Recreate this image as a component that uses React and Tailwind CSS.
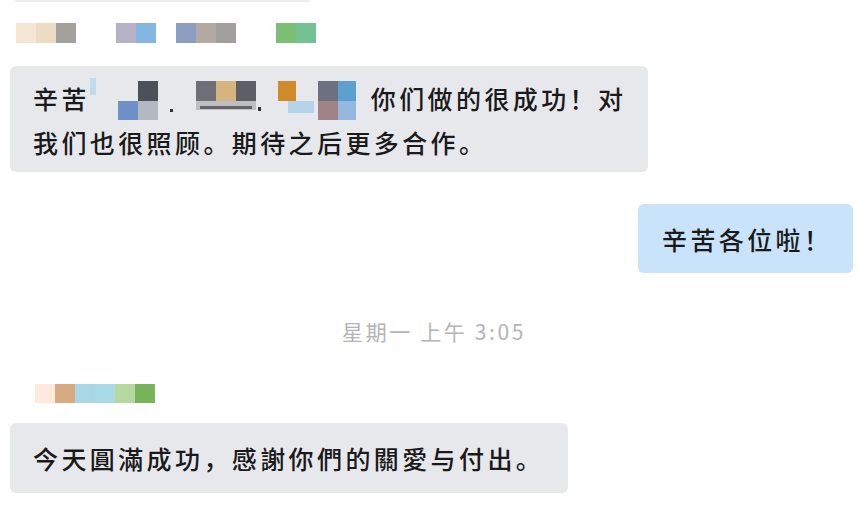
const topBlocks = [
  { x: 16, c: '#f5e6d4' },
  { x: 36, c: '#ecdcc4' },
  { x: 56, c: '#a3a19b' },
  { x: 116, c: '#b4b2c4' },
  { x: 136, c: '#84b6e2' },
  { x: 176, c: '#8c9ec2' },
  { x: 196, c: '#b2aaa2' },
  { x: 216, c: '#a2a09c' },
  { x: 276, c: '#7cc076' },
  { x: 296, c: '#74c294' },
]

const bottomBlocks = ['#fcebdc', '#d8aa82', '#a8d8e6', '#a8dae8', '#b4d8a0', '#78b45a']

// mosaic over the names in the first bubble, coords relative to svg (x from 89)
const nameRects = [
  { x: 0, y: 2, w: 6, h: 17, c: '#c0dcf0' },
  { x: 48, y: 5, w: 20, h: 20, c: '#4c5058' },
  { x: 28, y: 25, w: 20, h: 20, c: '#7090c8' },
  { x: 48, y: 25, w: 20, h: 20, c: '#b4b8c0' },
  { x: 106, y: 5, w: 20, h: 20, c: '#6e6e76' },
  { x: 126, y: 5, w: 20, h: 20, c: '#d6b47e' },
  { x: 146, y: 5, w: 20, h: 20, c: '#5e5e66' },
  { x: 188, y: 5, w: 18, h: 20, c: '#d08a2a' },
  { x: 198, y: 25, w: 26, h: 12, c: '#b4d4ea' },
  { x: 228, y: 5, w: 20, h: 20, c: '#6c7080' },
  { x: 248, y: 5, w: 18, h: 20, c: '#5ca0d0' },
  { x: 228, y: 25, w: 20, h: 20, c: '#a08486' },
  { x: 248, y: 25, w: 18, h: 20, c: '#94b8e0' },
]

function NameMosaic() {
  return (
    <svg width="281" height="44" viewBox="0 0 281 44" className="shrink-0">
      {nameRects.map((r, i) => (
        <rect key={i} x={r.x} y={r.y} width={r.w} height={r.h} fill={r.c} />
      ))}
      <rect x="80" y="33" width="3" height="3" fill="#333" />
      <rect x="106" y="25" width="60" height="9" fill="#9c9aa2" opacity="0.55" />
      <rect x="110" y="30" width="52" height="3" fill="#2a2a2a" opacity="0.6" />
      <rect x="168" y="31" width="3" height="4" fill="#333" />
    </svg>
  )
}

export default function App() {
  const font = { fontFamily: '"Noto Sans CJK SC", "Noto Sans", sans-serif' }

  return (
    <div className="w-[868px] h-[512px] bg-white overflow-hidden text-[#1a1a1a]" style={font}>
      {/* bottom edge of previous bubble */}
      <div className="ml-[15px] w-[295px] h-[2px] bg-[#ececee] rounded-b" />

      {/* blurred sender name */}
      <div className="relative mt-[21px] h-[20px]">
        {topBlocks.map((b, i) => (
          <div
            key={i}
            className="absolute top-0 w-[20px] h-[20px]"
            style={{ left: b.x, background: b.c }}
          />
        ))}
      </div>

      <div className="mt-[23px] ml-[10px] w-[638px] h-[106px] rounded-md bg-[#e7e8ec] pl-[23px] pt-[10px] text-[25px] font-medium leading-[44px] tracking-[3.4px]">
        <div className="flex items-start whitespace-nowrap">
          <span>辛苦</span>
          <NameMosaic />
          <span>你们做的很成功！对</span>
        </div>
        <div className="whitespace-nowrap">我们也很照顾。期待之后更多合作。</div>
      </div>

      <div className="mt-[32px] flex justify-end pr-[15px]">
        <div className="w-[215px] h-[69px] rounded-md bg-[#c9e3fa] pl-[24px] flex items-center text-[25px] font-medium leading-[44px] tracking-[3.4px] whitespace-nowrap">
          辛苦各位啦！
        </div>
      </div>

      <div className="mt-[44px] text-center text-[21px] leading-[28px] tracking-[2.6px] text-[#b4b4b4]">
        星期一 上午 3:05
      </div>

      <div className="mt-[39px] ml-[35px] flex">
        {bottomBlocks.map((c, i) => (
          <div key={i} className="w-[20px] h-[19px]" style={{ background: c }} />
        ))}
      </div>

      <div className="mt-[20px] ml-[10px] w-[558px] h-[70px] rounded-md bg-[#e7e8ec] pl-[23px] flex items-center text-[25px] font-medium leading-[44px] tracking-[3.4px] whitespace-nowrap">
        今天圓滿成功，感謝你們的關愛与付出。
      </div>
    </div>
  )
}
